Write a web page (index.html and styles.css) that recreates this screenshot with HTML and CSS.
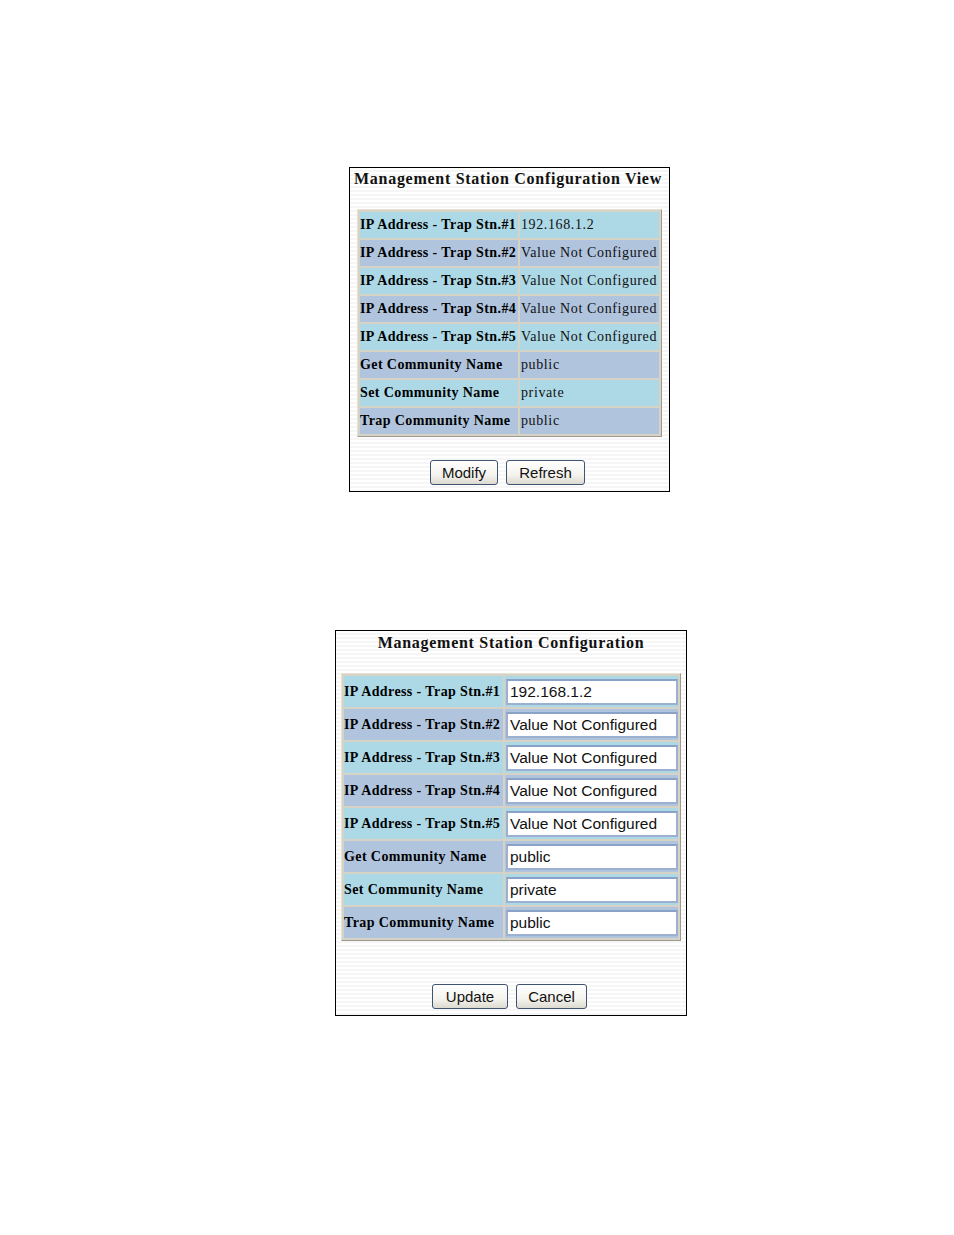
FILE: index.html
```html
<!DOCTYPE html>
<html>
<head>
<meta charset="utf-8">
<link rel="stylesheet" href="styles.css">
</head>
<body>
<div class="page">
  <div class="panel panel-view">
    <div class="title title-left">Management Station Configuration View</div>
    <table class="grid grid-view">
      <tr class="c"><th>IP Address - Trap Stn.#1</th><td>192.168.1.2</td></tr>
      <tr class="s"><th>IP Address - Trap Stn.#2</th><td>Value Not Configured</td></tr>
      <tr class="c"><th>IP Address - Trap Stn.#3</th><td>Value Not Configured</td></tr>
      <tr class="s"><th>IP Address - Trap Stn.#4</th><td>Value Not Configured</td></tr>
      <tr class="c"><th>IP Address - Trap Stn.#5</th><td>Value Not Configured</td></tr>
      <tr class="s"><th>Get Community Name</th><td>public</td></tr>
      <tr class="c"><th>Set Community Name</th><td>private</td></tr>
      <tr class="s"><th>Trap Community Name</th><td>public</td></tr>
    </table>
    <div class="buttons buttons-view">
      <button class="btn btn-modify">Modify</button>
      <button class="btn btn-refresh">Refresh</button>
    </div>
  </div>

  <div class="panel panel-edit">
    <div class="title title-center">Management Station Configuration</div>
    <table class="grid grid-edit">
      <tr class="c"><th>IP Address - Trap Stn.#1</th><td><input class="field" value="192.168.1.2"></td></tr>
      <tr class="s"><th>IP Address - Trap Stn.#2</th><td><input class="field" value="Value Not Configured"></td></tr>
      <tr class="c"><th>IP Address - Trap Stn.#3</th><td><input class="field" value="Value Not Configured"></td></tr>
      <tr class="s"><th>IP Address - Trap Stn.#4</th><td><input class="field" value="Value Not Configured"></td></tr>
      <tr class="c"><th>IP Address - Trap Stn.#5</th><td><input class="field" value="Value Not Configured"></td></tr>
      <tr class="s"><th>Get Community Name</th><td><input class="field" value="public"></td></tr>
      <tr class="c"><th>Set Community Name</th><td><input class="field" value="private"></td></tr>
      <tr class="s"><th>Trap Community Name</th><td><input class="field" value="public"></td></tr>
    </table>
    <div class="buttons buttons-edit">
      <button class="btn btn-update">Update</button>
      <button class="btn btn-cancel">Cancel</button>
    </div>
  </div>
</div>
</body>
</html>
```

FILE: styles.css
```css
html, body {
  margin: 0;
  padding: 0;
  background: #ffffff;
}

.page {
  padding-top: 167px;
  display: flex;
  flex-direction: column;
  align-items: flex-start;
}

.panel {
  box-sizing: border-box;
  border: 1px solid #000000;
  background: repeating-linear-gradient(to bottom, #ffffff 0, #ffffff 2px, #f6f6f6 2px, #f6f6f6 4px);
  display: flex;
  flex-direction: column;
}

.panel-view {
  margin-left: 349px;
  width: 321px;
  height: 325px;
  padding: 0 7px 0 7px;
}

.panel-edit {
  margin-left: 335px;
  margin-top: 138px;
  width: 352px;
  height: 386px;
  padding: 0 5px 0 5px;
}

.title {
  font-family: "Liberation Serif", "Times New Roman", serif;
  font-weight: bold;
  font-size: 16px;
  letter-spacing: 0.72px;
  color: #111111;
  white-space: nowrap;
}

.title-left {
  margin-top: 1px;
  margin-left: -3px;
  height: 20px;
  line-height: 20px;
}

.title-center {
  text-align: center;
  margin-top: 2px;
  height: 20px;
  line-height: 20px;
}

.grid {
  border-collapse: separate;
  border-spacing: 2px;
  background: #d6d3c6;
  border-style: solid;
  border-width: 1px;
  border-color: #e6e3d6 #9c9a8f #9c9a8f #e6e3d6;
  width: 100%;
}

.grid-view {
  margin-top: 20px;
}

.grid-edit {
  margin-top: 20px;
}

.grid th {
  font-family: "Liberation Serif", "Times New Roman", serif;
  font-weight: bold;
  font-size: 14px;
  letter-spacing: 0.4px;
  color: #000000;
  text-align: left;
  white-space: nowrap;
  padding: 0 0 0 0;
}

.grid td {
  font-family: "Liberation Serif", "Times New Roman", serif;
  font-size: 14px;
  letter-spacing: 0.62px;
  color: #111111;
  white-space: nowrap;
  padding: 0 0 0 1px;
}

.grid-view th, .grid-view td {
  height: 26px;
}

.grid-view th {
  width: 158px;
}

.grid-edit th, .grid-edit td {
  height: 31px;
}

.grid-edit th {
  width: 159px;
}

.grid-edit td {
  padding: 0 0 0 1px;
}

tr.c th, tr.c td {
  background: #add8e6;
}

tr.s th, tr.s td {
  background: #b0c4de;
}

.field {
  box-sizing: border-box;
  width: 100%;
  height: 26px;
  border: 2px solid #9cb1d2;
  border-top-color: #8aa2c8;
  background: #ffffff;
  font-family: "Liberation Sans", Arial, sans-serif;
  font-size: 15.5px;
  letter-spacing: 0;
  color: #111111;
  padding: 0 2px;
  margin: 0;
  display: block;
}

.buttons {
  display: flex;
  justify-content: center;
  gap: 8px;
}

.buttons-view {
  margin-top: 23px;
  margin-left: -4px;
}

.buttons-edit {
  margin-top: 43px;
  margin-left: -3px;
}

.btn {
  box-sizing: border-box;
  height: 25px;
  padding: 0;
  font-family: "Liberation Sans", Arial, sans-serif;
  font-size: 15px;
  color: #111111;
  border: 1px solid #3e5470;
  border-radius: 3px;
  background: linear-gradient(to bottom, #ffffff 0%, #f4f3ee 60%, #dcdad0 100%);
  margin: 0;
}

.btn-modify { width: 68px; }
.btn-refresh { width: 79px; }
.btn-update { width: 76px; }
.btn-cancel { width: 71px; }
```
